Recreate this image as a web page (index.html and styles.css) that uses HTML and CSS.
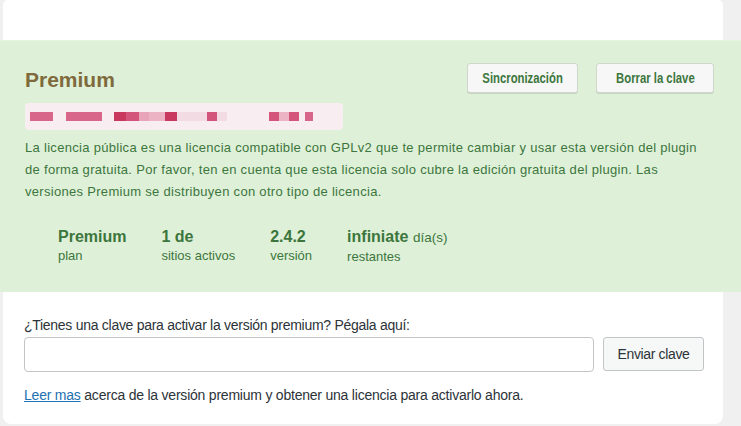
FILE: index.html
```html
<!DOCTYPE html>
<html lang="es">
<head>
<meta charset="utf-8">
<link rel="stylesheet" href="styles.css">
</head>
<body>
<div class="card">
  <div class="top-space"></div>
  <div class="license">
    <div class="lic-head">
      <h2 class="lic-title">Premium</h2>
      <div class="lic-actions">
        <button class="btn-green btn-sync"><span class="cond">Sincronización</span></button>
        <button class="btn-green btn-del"><span class="cond">Borrar la clave</span></button>
      </div>
    </div>
    <div class="keybar">
      <span class="k k1" style="width:23px"></span>
      <span class="k k0" style="width:13px"></span>
      <span class="k k1" style="width:36px"></span>
      <span class="k k0" style="width:12px"></span>
      <span class="k k3" style="width:12px"></span>
      <span class="k k2" style="width:13px"></span>
      <span class="k k1b" style="width:10px"></span>
      <span class="k k4" style="width:16px"></span>
      <span class="k k3" style="width:12px"></span>
      <span class="k k5" style="width:30px"></span>
      <span class="k k2" style="width:10px"></span>
      <span class="k k5" style="width:10px"></span>
      <span class="k k0" style="width:42px"></span>
      <span class="k k2" style="width:10px"></span>
      <span class="k k4" style="width:10px"></span>
      <span class="k k2" style="width:10px"></span>
      <span class="k k0" style="width:6px"></span>
      <span class="k k1" style="width:8px"></span>
    </div>
    <p class="lic-text">La licencia pública es una licencia compatible con GPLv2 que te permite cambiar y usar esta versión del plugin de forma gratuita. Por favor, ten en cuenta que esta licencia solo cubre la edición gratuita del plugin. Las versiones Premium se distribuyen con otro tipo de licencia.</p>
    <div class="stats">
      <div class="stat"><div class="val">Premium</div><div class="lbl">plan</div></div>
      <div class="stat"><div class="val">1 de</div><div class="lbl">sitios activos</div></div>
      <div class="stat"><div class="val">2.4.2</div><div class="lbl">versión</div></div>
      <div class="stat"><div class="val">infiniate <span class="unit">día(s)</span></div><div class="lbl">restantes</div></div>
    </div>
  </div>
  <div class="activate">
    <label class="act-label">¿Tienes una clave para activar la versión premium? Pégala aquí:</label>
    <div class="act-row">
      <input class="act-input" type="text">
      <button class="btn-gray">Enviar clave</button>
    </div>
    <p class="act-more"><a href="#">Leer mas</a> acerca de la versión premium y obtener una licencia para activarlo ahora.</p>
  </div>
</div>
</body>
</html>
```
FILE: styles.css
```css
html, body {
  margin: 0;
  padding: 0;
  background: #f0f0f1;
  font-family: "Liberation Sans", Arial, sans-serif;
  overflow: hidden;
}
.card {
  margin-left: 3px;
  width: 720px;
  height: 424px;
  background: #fff;
  border-radius: 5px 5px 8px 8px;
  box-sizing: border-box;
}
.top-space {
  height: 40px;
}
.license {
  margin-left: -3px;
  width: 741px;
  height: 252px;
  box-sizing: border-box;
  background: #dff0d8;
  border-top: 1px solid #e6f3e0;
  padding: 22px 27px 0 25px;
  color: #3c763d;
}
.lic-head {
  display: flex;
  justify-content: space-between;
  align-items: center;
  height: 29px;
}
.lic-title {
  margin: 4px 0 0 0;
  font-size: 21px;
  font-weight: bold;
  color: #7e6a3c;
  letter-spacing: 0;
}
.lic-actions {
  display: flex;
  gap: 18px;
}
.btn-green {
  height: 30px;
  padding: 0;
  background: #f7f7f7;
  border: 1px solid #d0d8cc;
  border-radius: 3px;
  color: #3c763d;
  font-family: "Liberation Sans", Arial, sans-serif;
  font-size: 14.5px;
  font-weight: bold;
  box-shadow: 0 1px 0 #c8d3c2;
  white-space: nowrap;
}
.cond {
  display: inline-block;
  transform: scaleX(0.78);
}
.btn-sync { width: 111px; }
.btn-del { width: 118px; }
.keybar {
  margin-top: 11px;
  width: 318px;
  height: 27px;
  background: #f8eef2;
  border-radius: 4px;
  display: flex;
  align-items: center;
  padding-left: 5px;
  box-sizing: border-box;
}
.k {
  height: 9px;
  display: inline-block;
}
.k0 { background: transparent; }
.k1 { background: #d7668a; }
.k1b { background: #e8a5b9; }
.k2 { background: #d3557b; }
.k3 { background: #c8385f; }
.k4 { background: #ebb3c4; }
.k5 { background: #f3dbe3; }
.lic-text {
  margin: 7px 0 0 0;
  font-size: 13px;
  line-height: 22px;
  letter-spacing: 0.3px;
}
.stats {
  display: flex;
  gap: 35px;
  margin: 25px 0 0 33px;
}
.stat .val {
  font-size: 16px;
  font-weight: bold;
  line-height: 18px;
}
.stat .val .unit {
  font-weight: normal;
  font-size: 13.5px;
}
.stat .lbl {
  font-size: 13px;
  line-height: 18px;
  margin-top: 1px;
}
.activate {
  padding: 24px 0 0 21px;
}
.act-label {
  display: block;
  font-size: 14px;
  letter-spacing: -0.28px;
  color: #2c3338;
  line-height: 18px;
}
.act-row {
  display: flex;
  gap: 9px;
  margin-top: 3px;
}
.act-input {
  width: 570px;
  height: 35px;
  box-sizing: border-box;
  border: 1px solid #c3c4c7;
  border-radius: 4px;
  margin: 0;
}
.btn-gray {
  width: 101px;
  height: 34px;
  background: #f6f7f7;
  border: 1px solid #c3c4c7;
  border-radius: 3px;
  color: #2c3338;
  font-family: "Liberation Sans", Arial, sans-serif;
  font-size: 14px;
  letter-spacing: -0.35px;
}
.act-more {
  margin: 14px 0 0 0;
  font-size: 14px;
  letter-spacing: -0.22px;
  color: #2c3338;
  line-height: 18px;
}
.act-more a {
  color: #2271b1;
}
```
